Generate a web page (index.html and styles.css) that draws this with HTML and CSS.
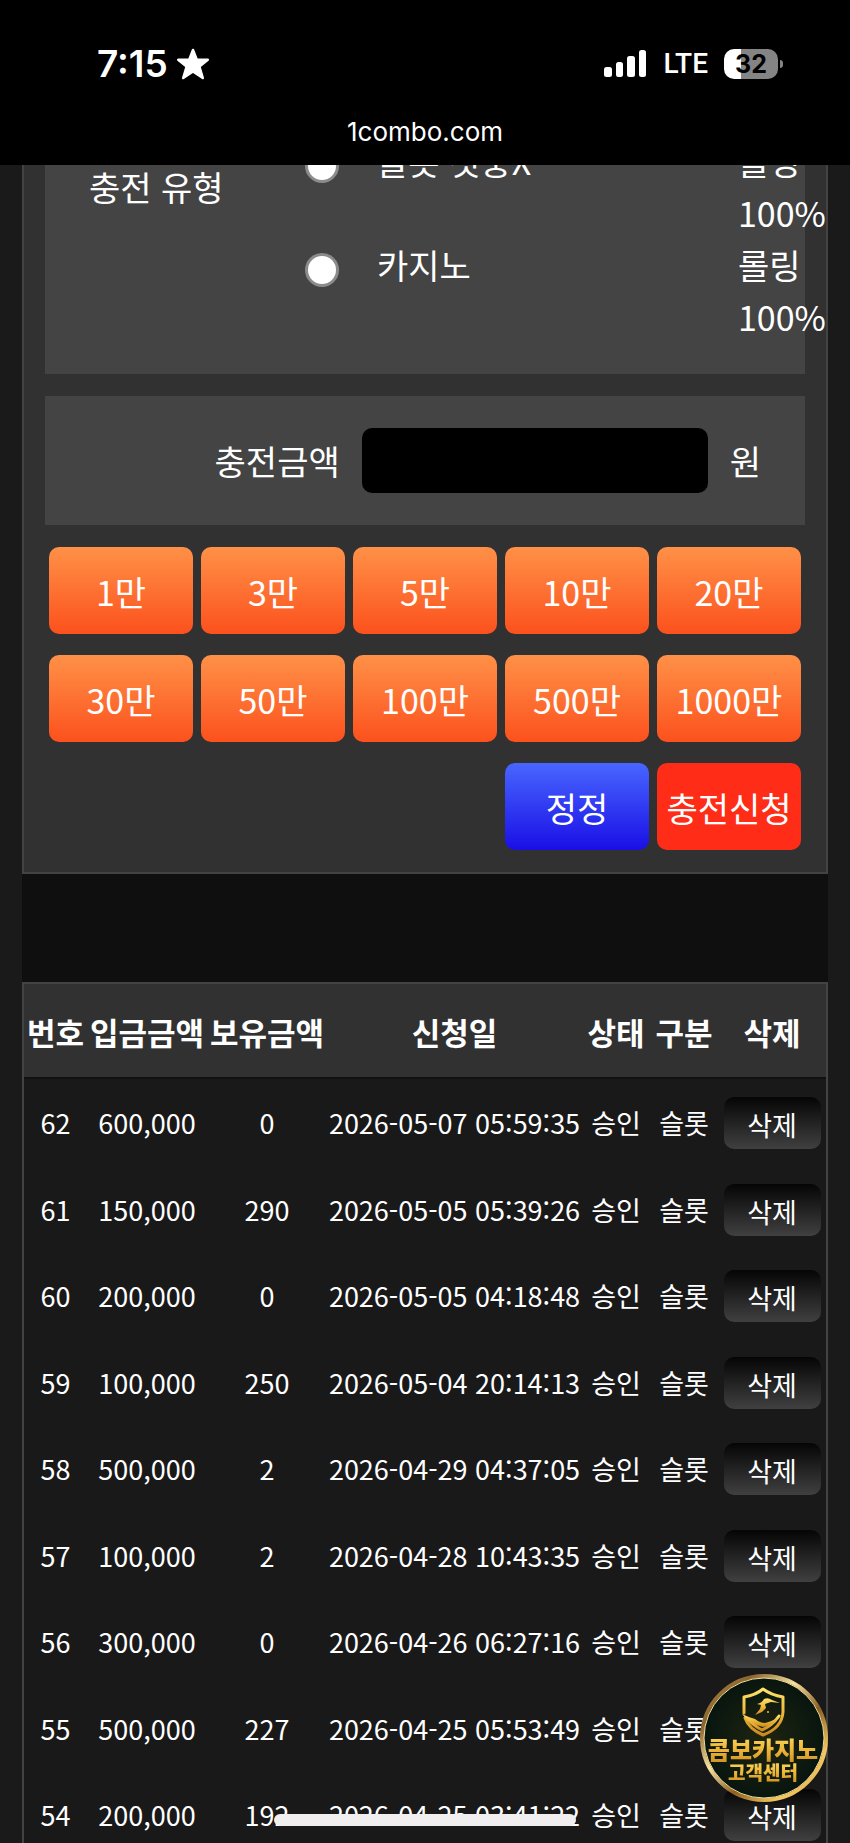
FILE: index.html
```html
<!DOCTYPE html>
<html lang="ko">
<head>
    <meta charset="UTF-8">
    <meta name="viewport" content="width=device-width, initial-scale=1.0">
    <title>충전신청</title>
    <link rel="stylesheet" href="styles.css">
</head>
<body>
    <header class="top">
        <div class="status">
            <div class="status-left">
                <span class="time">7:15</span>
                <svg width="34" height="34" viewBox="0 0 34 34">
                    <path d="M17 3 L20.8 12.6 L31.8 12.8 L23.4 19.6 L26.8 31 L17 24.4 L7.2 31 L10.6 19.6 L2.2 12.8 L13.2 12.6 Z" fill="#fff" stroke="#fff" stroke-width="2.5" stroke-linejoin="round"/>
                </svg>
            </div>
            <div class="status-right">
                <svg width="43" height="28" viewBox="0 0 43 28" fill="#fff">
                    <rect x="0" y="17" width="8" height="10" rx="2.5"/>
                    <rect x="12" y="12" width="7" height="15" rx="2.5"/>
                    <rect x="23" y="6" width="8" height="21" rx="2.5"/>
                    <rect x="35" y="0" width="7" height="27" rx="2.5"/>
                </svg>
                <span class="lte">LTE</span>
                <div class="battery"><span>32</span></div>
            </div>
        </div>
        <div class="url">1combo.com</div>
    </header>

    <main>
        <form class="charge" id="chargeForm">
            <div class="panel type">
                <span class="type-title">충전 유형</span>
                <div class="type-list">
                    <div class="type-row">
                        <input type="radio" name="type" id="typeSlot">
                        <label for="typeSlot">슬롯 첫충X</label>
                        <span class="rolling">롤링 100%</span>
                    </div>
                    <div class="type-row">
                        <input type="radio" name="type" id="typeCasino">
                        <label for="typeCasino">카지노</label>
                        <span class="rolling">롤링 100%</span>
                    </div>
                </div>
            </div>

            <div class="panel amount">
                <label for="amount">충전금액</label>
                <input type="text" id="amount" name="amount" inputmode="numeric">
                <span>원</span>
            </div>

            <div class="buttons">
                <button type="button" data-won="10000">1만</button>
                <button type="button" data-won="30000">3만</button>
                <button type="button" data-won="50000">5만</button>
                <button type="button" data-won="100000">10만</button>
                <button type="button" data-won="200000">20만</button>
                <button type="button" data-won="300000">30만</button>
                <button type="button" data-won="500000">50만</button>
                <button type="button" data-won="1000000">100만</button>
                <button type="button" data-won="5000000">500만</button>
                <button type="button" data-won="10000000">1000만</button>
                <button type="reset" class="reset">정정</button>
                <button type="submit" class="submit">충전신청</button>
            </div>
        </form>

        <table class="history">
            <colgroup>
                <col class="c-no"><col class="c-money"><col class="c-money"><col>
                <col class="c-state"><col class="c-state"><col class="c-del">
            </colgroup>
            <thead>
                <tr><th>번호</th><th>입금금액</th><th>보유금액</th><th>신청일</th><th>상태</th><th>구분</th><th>삭제</th></tr>
            </thead>
            <tbody>
                <tr><td>62</td><td>600,000</td><td>0</td><td>2026-05-07 05:59:35</td><td>승인</td><td>슬롯</td><td><button type="button">삭제</button></td></tr>
                <tr><td>61</td><td>150,000</td><td>290</td><td>2026-05-05 05:39:26</td><td>승인</td><td>슬롯</td><td><button type="button">삭제</button></td></tr>
                <tr><td>60</td><td>200,000</td><td>0</td><td>2026-05-05 04:18:48</td><td>승인</td><td>슬롯</td><td><button type="button">삭제</button></td></tr>
                <tr><td>59</td><td>100,000</td><td>250</td><td>2026-05-04 20:14:13</td><td>승인</td><td>슬롯</td><td><button type="button">삭제</button></td></tr>
                <tr><td>58</td><td>500,000</td><td>2</td><td>2026-04-29 04:37:05</td><td>승인</td><td>슬롯</td><td><button type="button">삭제</button></td></tr>
                <tr><td>57</td><td>100,000</td><td>2</td><td>2026-04-28 10:43:35</td><td>승인</td><td>슬롯</td><td><button type="button">삭제</button></td></tr>
                <tr><td>56</td><td>300,000</td><td>0</td><td>2026-04-26 06:27:16</td><td>승인</td><td>슬롯</td><td><button type="button">삭제</button></td></tr>
                <tr><td>55</td><td>500,000</td><td>227</td><td>2026-04-25 05:53:49</td><td>승인</td><td>슬롯</td><td><button type="button">삭제</button></td></tr>
                <tr><td>54</td><td>200,000</td><td>192</td><td>2026-04-25 03:41:22</td><td>승인</td><td>슬롯</td><td><button type="button">삭제</button></td></tr>
            </tbody>
        </table>
    </main>

    <a class="support" href="#">
        <svg width="128" height="128" viewBox="0 0 128 128">
            <defs>
                <linearGradient id="gold" x1="0" y1="0" x2="0" y2="1">
                    <stop offset="0" stop-color="#fbe36a"/>
                    <stop offset="0.5" stop-color="#f0b93a"/>
                    <stop offset="1" stop-color="#c98a1e"/>
                </linearGradient>
                <linearGradient id="ring" x1="0" y1="0" x2="1" y2="1">
                    <stop offset="0" stop-color="#b98a45"/>
                    <stop offset="0.2" stop-color="#8a6530"/>
                    <stop offset="0.4" stop-color="#f7e2a0"/>
                    <stop offset="0.6" stop-color="#8a6022"/>
                    <stop offset="0.8" stop-color="#f3c761"/>
                    <stop offset="1" stop-color="#d9a748"/>
                </linearGradient>
                <radialGradient id="felt">
                    <stop offset="0" stop-color="#1f2410"/>
                    <stop offset="1" stop-color="#07150f"/>
                </radialGradient>
            </defs>
            <circle cx="64" cy="64" r="62" fill="url(#felt)" stroke="url(#ring)" stroke-width="4"/>
            <circle cx="64" cy="64" r="60" fill="none" stroke="#f6dc94" stroke-width="1"/>
            <g fill="none" stroke="url(#gold)" stroke-width="3" stroke-linejoin="round" stroke-linecap="round">
                <path d="M44 39 V23 Q56 21 63 15 Q71 21 83 23 V38 Q82 54 63 61 Q49 55 45 44"/>
                <path d="M48 45 Q54 52 62 56 Q72 52 79 42"/>
            </g>
            <path d="M42 40 Q48 43 55 45 Q60 49 65 49 Q74 47 81 41 Q75 51 63 53 Q49 50 42 40 Z" fill="url(#gold)"/>
            <path d="M57 30 Q62 29 64 25 Q68 23 72 26 L80 29 L71 28 L65 30 L66 34 L62 38 L55 41 L60 35 L61 31 Z" fill="url(#gold)"/>
            <circle cx="68" cy="38" r="1" fill="#f0b93a"/>
            <text class="support-name" x="63" y="85" text-anchor="middle" fill="url(#gold)">콤보카지노</text>
            <text class="support-desc" x="63" y="106" text-anchor="middle" fill="url(#gold)">고객센터</text>
        </svg>
    </a>
    <div class="home-bar"></div>

    <script>
        const amount = document.getElementById('amount');

        // 금액 버튼을 누르면 충전금액에 더한다
        document.querySelectorAll('[data-won]').forEach(function (btn) {
            btn.onclick = function () {
                const now = Number(amount.value.replace(/,/g, '')) || 0;
                amount.value = (now + Number(btn.dataset.won)).toLocaleString();
            };
        });

        document.getElementById('chargeForm').onsubmit = function (event) {
            event.preventDefault();
        };
    </script>
</body>
</html>
```
FILE: styles.css
```css
* {
    box-sizing: border-box;
}

body {
    margin: 0;
    height: 100vh;
    overflow: hidden;
    padding: 135px 22px 0;
    background: #1b1a1b;
    color: #fff;
    font-family: "Noto Sans CJK KR", sans-serif;
    font-size: 34px;
    line-height: 52px;
}

button, input {
    font: inherit;
    color: inherit;
}

/* 상단 상태바 */
.top {
    position: fixed;
    top: 0;
    left: 0;
    right: 0;
    z-index: 10;
    height: 165px;
    padding-top: 44px;
    background: #000;
    font-family: Inter, sans-serif;
}

.status {
    display: flex;
    justify-content: space-between;
    height: 40px;
    line-height: 40px;
    padding: 0 72px 0 97px;
}

.status-left,
.status-right {
    display: flex;
    align-items: center;
}

.status-left {
    gap: 8px;
}

.time {
    font-size: 37px;
    font-weight: 600;
}

.status-right {
    gap: 16px;
}

.lte {
    font-family: Roboto, sans-serif;
    font-size: 28px;
    font-weight: 500;
}

.battery {
    position: relative;
    width: 54px;
    height: 30px;
    border-radius: 10px;
    background: linear-gradient(90deg, #fff 17px, #848484 17px);
    color: #000;
    font-size: 25px;
    font-weight: 700;
    line-height: 30px;
    text-align: center;
}

.battery::after {
    content: "";
    position: absolute;
    right: -5px;
    top: 11px;
    width: 3px;
    height: 8px;
    border-radius: 0 4px 4px 0;
    background: #848484;
}

.url {
    margin-top: 28px;
    font-size: 26px;
    line-height: 40px;
    text-align: center;
}

/* 충전 폼 */
main {
    background: #100f10;
}

.charge {
    display: flex;
    flex-direction: column;
    gap: 22px;
    padding: 0 21px 22px;
    border: 2px solid #434343;
    border-top: 0;
    background: #323132;
}

.panel {
    display: flex;
    background: #444;
}

.type {
    padding: 0 0 31px 44px;
}

.type-title {
    width: 216px;
    padding-top: 26px;
}

.type-list {
    flex: 1;
}

.type-row {
    display: flex;
    align-items: flex-start;
}

.type-row input {
    appearance: none;
    flex: none;
    width: 34px;
    height: 34px;
    margin: 14px 38px 0 0;
    border: 3px solid #8b8b8b;
    border-radius: 50%;
    background: #fff;
}

.type-row input:checked {
    border: 10px solid #1a6dff;
}

.type-row label {
    flex: 1;
}

.rolling {
    width: 67px;
}

.amount {
    justify-content: flex-end;
    align-items: center;
    gap: 22px;
    height: 129px;
    padding-right: 44px;
}

.amount input {
    width: 346px;
    height: 65px;
    padding: 0 16px;
    border: 0;
    border-radius: 10px;
    background: #000;
}

.buttons {
    display: grid;
    grid-template-columns: repeat(5, 1fr);
    gap: 21px 8px;
    padding: 0 4px;
}

.buttons button {
    height: 87px;
    padding: 2px 0 0;
    border: 0;
    border-radius: 10px;
    background: linear-gradient(#ff9147, #fc511d);
    cursor: pointer;
}

.buttons .reset {
    grid-column: 4;
    background: linear-gradient(#4866ff, #1a0fe6);
}

.buttons .submit {
    background: #ff2d17;
}

/* 충전 내역 */
.history {
    width: 100%;
    margin-top: 108px;
    border: 2px solid #434343;
    border-spacing: 0;
    table-layout: fixed;
    background: #1a191a;
    font-size: 27px;
    text-align: center;
}

.c-no {
    width: 63px;
}

.c-money {
    width: 120px;
}

.c-state {
    width: 68px;
}

.c-del {
    width: 108px;
}

.history th,
.history td {
    padding: 2px 0 0;
    white-space: nowrap;
}

.history th {
    height: 95px;
    border-bottom: 2px solid #121112;
    background: #323132;
    font-size: 31px;
    font-weight: 700;
}

.history td {
    height: 86px;
}

.history tr:nth-child(even) td {
    height: 87px;
}

.history button {
    display: block;
    width: 97px;
    height: 52px;
    margin: 0 auto;
    padding: 2px 0 0;
    border: 0;
    border-radius: 10px;
    background: linear-gradient(#050505, #404040);
    cursor: pointer;
}

/* 고객센터 */
.support {
    position: fixed;
    right: 22px;
    bottom: 41px;
    width: 128px;
    height: 128px;
}

.support-name {
    font-size: 24px;
    font-weight: 900;
}

.support-desc {
    font-size: 19px;
    font-weight: 900;
}

.home-bar {
    position: fixed;
    left: 50%;
    bottom: 17px;
    width: 302px;
    height: 12px;
    margin-left: -151px;
    border-radius: 6px;
    background: #f0eeef;
}
```
